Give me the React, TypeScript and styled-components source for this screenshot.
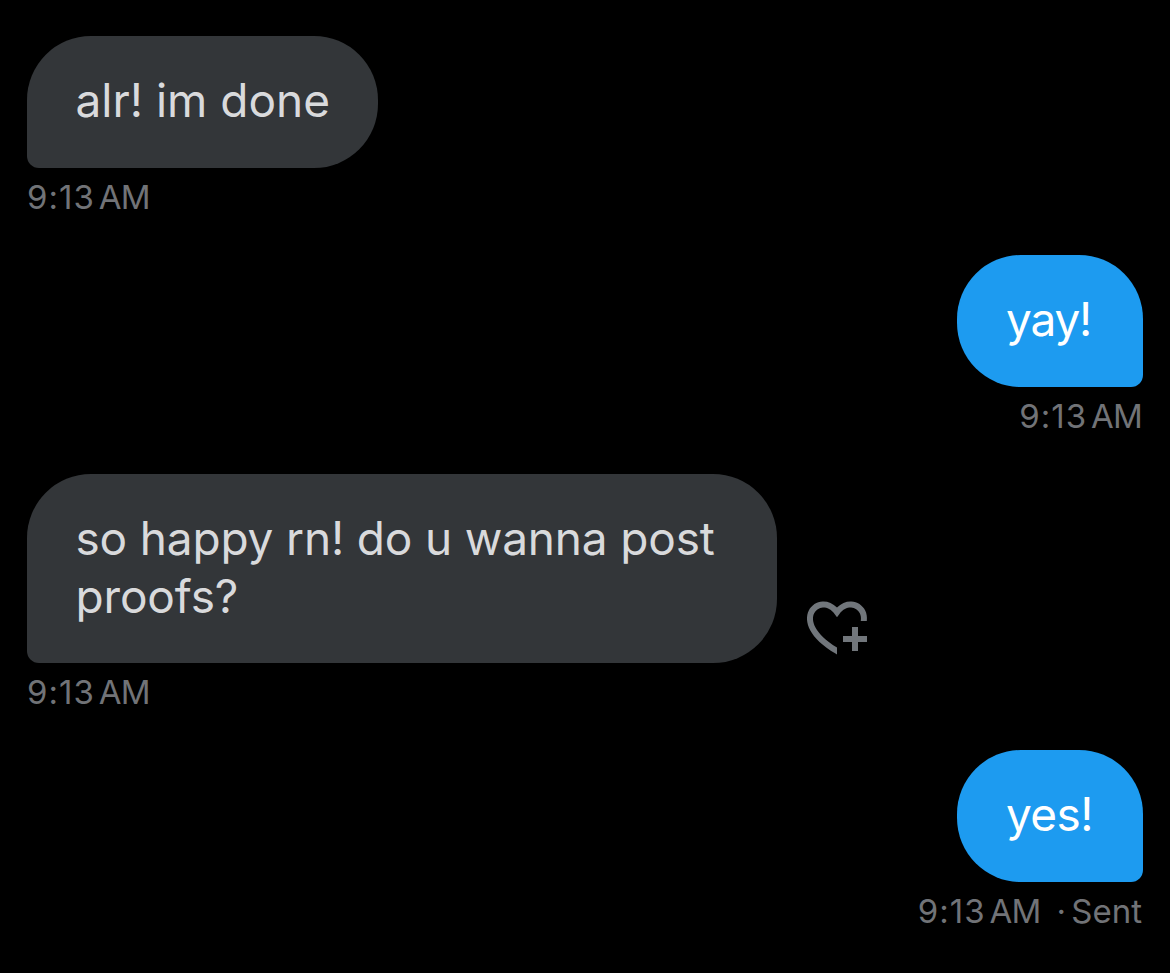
import React from "react";
import styled, { createGlobalStyle } from "styled-components";

const Global = createGlobalStyle`
  html, body { margin: 0; background: #000; }
  * { box-sizing: border-box; }
`;

const Conversation = styled.main`
  width: 1170px;
  height: 973px;
  padding: 36px 27px 0;
  background: #000;
  overflow: hidden;
  font-family: Inter, "Liberation Sans", sans-serif;
`;

const Message = styled.article<{ $mine?: boolean; $height: number }>`
  display: flex;
  flex-direction: column;
  align-items: ${(p) => (p.$mine ? "flex-end" : "flex-start")};
  height: ${(p) => p.$height}px;
`;

const BubbleRow = styled.div`
  display: flex;
  align-items: flex-end;
  gap: 24px;
`;

const Bubble = styled.div<{ $mine?: boolean; $width: number; $height: number }>`
  width: ${(p) => p.$width}px;
  height: ${(p) => p.$height}px;
  padding: 35px 0 0 ${(p) => (p.$mine ? 49 : 48.5)}px;
  border-radius: ${(p) => (p.$mine ? "64px 64px 12px 64px" : "64px 64px 64px 12px")};
  background: ${(p) => (p.$mine ? "#1d9bf0" : "#333639")};
  color: ${(p) => (p.$mine ? "#fff" : "#d9dadc")};
`;

const Line = styled.div<{ $spacing?: number }>`
  font-size: 46px;
  line-height: 58px;
  white-space: nowrap;
  letter-spacing: ${(p) => p.$spacing ?? 0}px;
`;

const Meta = styled.div<{ $mine?: boolean }>`
  display: flex;
  margin-top: 9px;
  padding: ${(p) => (p.$mine ? "0 1px 0 0" : "0")};
  font-size: 33px;
  line-height: 40px;
  color: #717377;
  white-space: pre;
`;

const Clock = styled.span`
  letter-spacing: 1px;
`;

const Period = styled.span`
  margin-left: 4px;
  letter-spacing: -0.8px;
`;

const Status = styled.span`
  margin-left: 16px;
  word-spacing: -4px;
`;

const ReactButton = styled.button`
  display: flex;
  padding: 0;
  border: 0;
  background: none;
`;

const HeartPlus = () => (
  <svg width="72" height="72" viewBox="0 0 24 24" fill="#71767b">
    <path d="M17 12v3h-2.998v2h3v3h2v-3h3v-2h-3.001v-3H17zm-5 6.839c-3.871-2.34-6.053-4.639-7.127-6.609-1.112-2.04-1.031-3.7-.479-4.82.561-1.13 1.667-1.84 2.91-1.91 1.222-.06 2.68.51 3.892 2.16l.806 1.09.805-1.09c1.211-1.65 2.668-2.22 3.89-2.16 1.242.07 2.347.78 2.908 1.91.334.677.49 1.554.321 2.59h2.011c.153-1.283-.039-2.469-.539-3.48-.887-1.79-2.647-2.91-4.601-3.01-1.65-.09-3.367.56-4.796 2.01-1.43-1.45-3.147-2.1-4.798-2.01-1.954.1-3.714 1.22-4.601 3.01-.896 1.81-.846 4.17.514 6.67 1.353 2.48 4.003 5.12 8.382 7.67l.502.299v-2.32z" />
  </svg>
);

const Time = () => (
  <>
    <Clock>9:13</Clock>
    <Period>AM</Period>
  </>
);

export default function App() {
  return (
    <>
      <Global />
      <Conversation>
        <Message $height={219}>
          <Bubble $width={351} $height={132}><Line>alr! im done</Line></Bubble>
          <Meta><Time /></Meta>
        </Message>
        <Message $mine $height={219}>
          <Bubble $mine $width={186} $height={132}><Line $spacing={-1.2}>yay!</Line></Bubble>
          <Meta $mine><Time /></Meta>
        </Message>
        <Message $height={276}>
          <BubbleRow>
            <Bubble $width={750} $height={189}>
              <Line $spacing={-0.17}>so happy rn! do u wanna post</Line>
              <Line $spacing={-0.15}>proofs?</Line>
            </Bubble>
            <ReactButton aria-label="Add reaction"><HeartPlus /></ReactButton>
          </BubbleRow>
          <Meta><Time /></Meta>
        </Message>
        <Message $mine $height={200}>
          <Bubble $mine $width={186} $height={132}><Line $spacing={-0.6}>yes!</Line></Bubble>
          <Meta $mine><Time /><Status>· Sent</Status></Meta>
        </Message>
      </Conversation>
    </>
  );
}
